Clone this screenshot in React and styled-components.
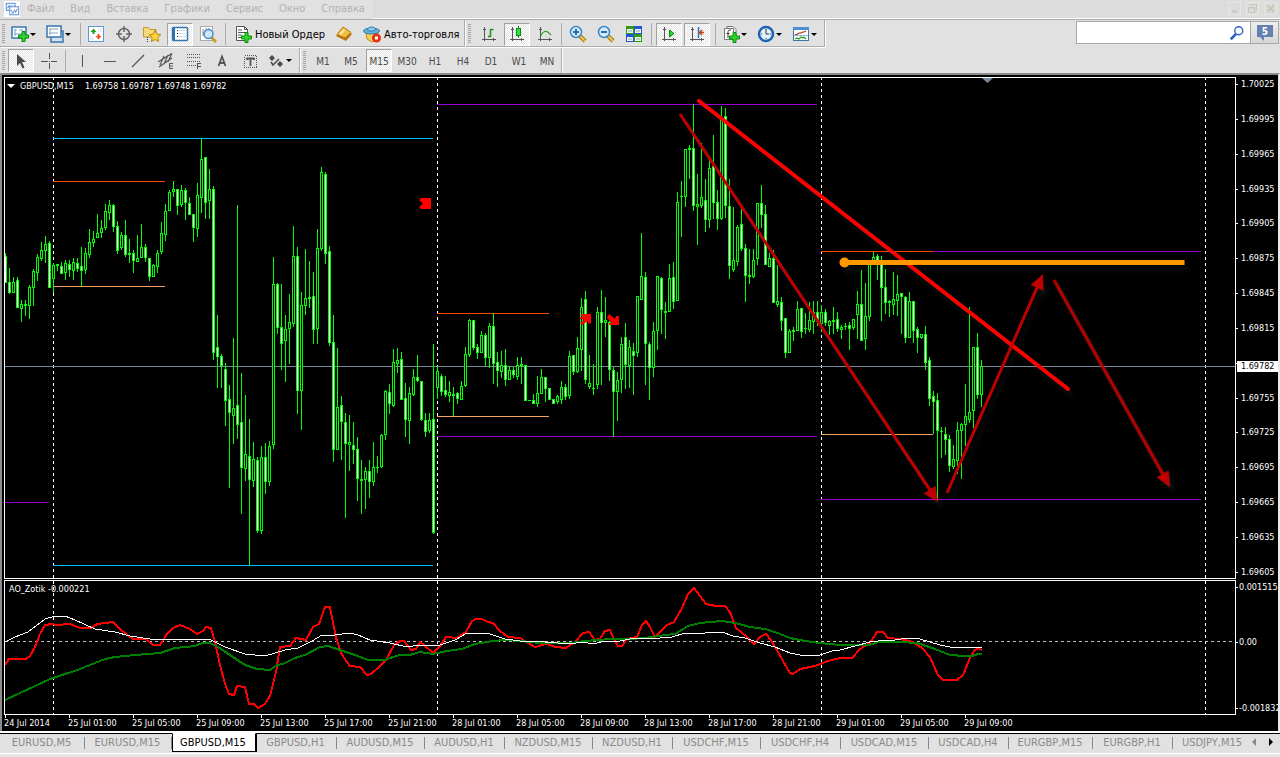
import React from "react";
import styled, { createGlobalStyle, css } from "styled-components";

const GlobalStyle = createGlobalStyle`
  * {
    box-sizing: border-box;
  }
  body {
    margin: 0;
    background: #e6e6e6;
    font-family: "DejaVu Sans Condensed", "DejaVu Sans", sans-serif;
    font-size: 11px;
    overflow-x: hidden;
  }
  button, input {
    font: inherit;
    margin: 0;
    padding: 0;
    border: 0;
    background: none;
  }
  svg {
    display: block;
  }
`;

const Terminal = styled.div`
  display: flex;
  flex-direction: column;
  min-height: 100vh;
`;

/* ---------- menu ---------- */

const MenuBar = styled.header`
  display: flex;
  align-items: stretch;
  justify-content: space-between;
  height: 20px;
  background: #dcdcdc;
  border-bottom: 1px solid #ababab;
  box-shadow: inset 0 -1px 0 #fff;
`;

const Menu = styled.nav`
  display: flex;
  align-items: center;
  gap: 16px;
  padding: 0 8px 1px 4px;
  background: #e1e1e1;
`;

const MenuItem = styled.button`
  color: #b2b2b2;
  line-height: 14px;
`;

const AppIcon = styled.div`
  background: #fff;
  margin-right: -9px;
`;

const WindowButtons = styled.div`
  display: flex;
  align-items: center;
  gap: 5px;
  padding-right: 3px;
  padding-bottom: 2px;
`;

const WindowButton = styled.button`
  width: 13px;
  height: 13px;
  border: 1px solid #e6e6e6;
`;

/* ---------- toolbars ---------- */

const ToolRow = styled.div`
  display: flex;
  justify-content: space-between;
  height: ${(p) => (p.$last ? "25px" : "28px")};
  background: #e1e1e1;
`;

const Group = styled.div`
  display: flex;
`;

const ToolBar = styled.div`
  display: flex;
  align-items: center;
  padding-top: ${(p) => (p.$flat ? "0" : "2px")};
  border-right: 1px solid #ababab;
  border-bottom: ${(p) => (p.$flat ? "0" : "1px solid #ababab")};
  box-shadow: 1px 1px 0 #fff;
  margin-right: 1px;
  margin-bottom: ${(p) => (p.$flat ? "0" : "1px")};
`;

const Grip = styled.span`
  width: ${(p) => p.$w || 8}px;
  height: 20px;
  background: repeating-linear-gradient(#a4a4a4 0 1px, #e1e1e1 1px 2px) 2px 0 / 3px 100% no-repeat;
`;

const Separator = styled.span`
  width: ${(p) => p.$w || 4}px;
  height: 22px;
  background: linear-gradient(#ababab, #ababab) center / 1px 100% no-repeat;
`;

const Tool = styled.button`
  display: flex;
  align-items: center;
  justify-content: ${(p) => (p.$menu || p.$text ? "flex-start" : "center")};
  gap: ${(p) => (p.$text ? "3px" : "1px")};
  width: ${(p) => (p.$menu ? "35px" : p.$text ? "auto" : "28px")};
  height: 23px;
  padding: ${(p) => (p.$menu ? "0 0 0 3px" : p.$text ? "0 5px" : "0")};
  color: #000;
  white-space: nowrap;
  ${(p) =>
    p.$time &&
    css`
      padding-top: 1px;
      font-size: 10px;
      color: #4a4a4a;
    `}
  ${(p) =>
    p.$on &&
    css`
      width: 26px;
      margin: 0 1px;
      border: 1px solid;
      border-color: #a0a0a0 #fff #fff #a0a0a0;
      background: repeating-conic-gradient(#fff 0 25%, #e4e4e4 0 50%) 0 0 / 2px 2px;
    `}
`;

const Caret = styled.span`
  border: 3px solid transparent;
  border-top-color: #000;
  border-bottom: 0;
`;

const SearchBox = styled.form`
  display: flex;
  align-items: stretch;
  height: 23px;
  margin: 1px 1px 0 0;
  border: 1px solid #a8a8a8;
  background: #fff;
`;

const SearchInput = styled.input`
  width: 152px;
  padding: 0 4px;
  outline: none;
`;

const SearchButton = styled.button`
  width: 21px;
`;

const ChatButton = styled.button`
  display: flex;
  align-items: center;
  justify-content: center;
  width: 28px;
  border-left: 1px solid #a8a8a8;
  background: linear-gradient(#eee, #d6d6d6);
`;

/* ---------- chart window ---------- */

const ChartWindow = styled.main`
  display: grid;
  grid-template-columns: minmax(0, 1fr) 42px;
  padding: 2px 0 0 2px;
  background: #000;
  color: #fff;
  font-size: 9px;
  line-height: 11px;
  border: solid #8c8c8c;
  border-width: 2px 2px 0 2px;
  border-right-color: #e8e8e8;
`;

const Pane = styled.section`
  position: relative;
  height: ${(p) => p.$h}px;
  margin-bottom: 1px;
  border: 1px solid #fff;
  overflow: hidden;
`;

const PaneTitle = styled.h2`
  position: absolute;
  top: 2px;
  left: 4px;
  display: flex;
  align-items: center;
  margin: 0;
  font-size: 9px;
  font-weight: 400;
  line-height: 12px;
`;

const Collapse = styled.span`
  border: 4px solid transparent;
  border-top-color: #fff;
  border-bottom: 0;
  margin: 0 5px 0 -2px;
`;

const Quote = styled.span`
  margin-left: 11px;
`;

const PriceScale = styled.ol`
  position: relative;
  display: flex;
  flex-direction: column;
  justify-content: space-between;
  height: 502px;
  margin: 0;
  padding: 2px 0 1px;
  list-style: none;
`;

const PriceMark = styled.li`
  display: flex;
  align-items: center;
  gap: 3px;
  height: 11px;
  white-space: nowrap;
  &::before {
    content: "";
    width: 2px;
    height: 1px;
    background: #fff;
  }
`;

/* rows follow the distance from zero to each end of the range */
const OscillatorScale = styled.ol`
  display: grid;
  grid-template-rows: 1515fr 1832fr 11px;
  height: 135px;
  margin: 0;
  padding: 2px 0 1px;
  list-style: none;
  overflow: hidden;
  ${PriceMark} {
    gap: 1px;
  }
`;

const LastPrice = styled.output`
  position: absolute;
  top: 284px;
  left: 1px;
  right: 0;
  padding-left: 4px;
  background: #fff;
  color: #000;
`;

const TimeScale = styled.ol`
  display: flex;
  height: 16px;
  margin: -1px 0 0;
  padding: 0;
  list-style: none;
`;

const TimeMark = styled.li`
  flex: 0 0 64px;
  white-space: nowrap;
  &::before {
    content: "";
    display: block;
    width: 1px;
    height: 3px;
    margin-left: 1px;
    background: #fff;
  }
`;

/* ---------- chart tabs ---------- */

const Tabs = styled.nav`
  display: flex;
  justify-content: space-between;
  height: 23px;
  background: linear-gradient(#fff 2px, #000 2px 3px, #e1e1e1 3px);
  border-bottom: 1px solid #fff;
`;

const TabList = styled.div`
  display: flex;
  min-width: 0;
  overflow: hidden;
`;

const Tab = styled.button`
  flex: 0 0 ${(p) => p.$w}px;
  height: 19px;
  margin-top: 2px;
  padding-right: 2px;
  color: ${(p) => (p.$active ? "#000" : "#8a8a8a")};
  font-size: 11px;
  line-height: 18px;
  background: ${(p) =>
    p.$active ? "#fff" : "linear-gradient(#8a8a8a, #8a8a8a) 100% 4px / 1px 12px no-repeat"};
  ${(p) =>
    p.$active &&
    css`
      border: 1px solid #000;
      border-top-color: #fff;
      box-shadow: 1px 0 0 #000;
    `}
`;

const TabArrows = styled.div`
  display: flex;
  align-items: center;
  gap: 13px;
  padding: 0 7px;
`;

const TabArrow = styled.button`
  border: 4px solid transparent;
  border-left: ${(p) => (p.$next ? "4px solid #000" : "0")};
  border-right: ${(p) => (p.$next ? "0" : "4px solid #8a8a8a")};
`;

/* ---------- icons ---------- */

function Icon({ children, size = 18 }) {
  return (
    <svg width={size} height={size} viewBox="0 0 18 18" fill="none" aria-hidden="true">
      {children}
    </svg>
  );
}

const Plus = ({ x = 7, y = 7 }) => (
  <path
    transform={`translate(${x} ${y})`}
    d="M4 .5h3V4h3.5v3H7v3.5H4V7H.5V4H4z"
    fill="#2fd52f"
    stroke="#0a8a0a"
  />
);

const Axes = () => (
  <g stroke="#555" shapeRendering="crispEdges">
    <path d="M4.500 2v14M2 14.500h14" />
    <path d="M3 4.500h3M13.500 13v3" />
  </g>
);

const Lens = ({ sign }) => (
  <>
    <path d="M11 11l5 5" stroke="#9a7413" strokeWidth="4" />
    <path d="M11 11l5 5" stroke="#f2c94a" strokeWidth="2" />
    <circle cx="7" cy="7" r="5.500" fill="#d3ecfb" stroke="#3f86c4" strokeWidth="1.500" />
    {sign && <path d={sign === "+" ? "M4 7h6M7 4v6" : "M4 7h6"} stroke="#2b6ea8" strokeWidth="2" />}
  </>
);

const icons = {
  app: (
    <>
      <rect x="2.500" y="2.500" width="10" height="8" fill="#e8f1ff" stroke="#4a82cf" />
      <path d="M4 8l2-3 1 3 2-3" stroke="#4a82cf" />
      <rect x="6.500" y="6.500" width="10" height="9" fill="#fff" stroke="#4a82cf" />
      <path d="M8 10l2 4 2-4 1 3 2-4" stroke="#4a82cf" />
    </>
  ),
  newChart: (
    <>
      <rect x="1" y="2" width="14" height="11" fill="#fff" stroke="#3a76ae" strokeWidth="1.500" />
      <path d="M4 4v7M3 9h9M3 5h3M8 5h4" stroke="#7ba4c8" />
      <Plus x={7} y={6} />
    </>
  ),
  profiles: (
    <>
      <rect x="5" y="6" width="12" height="11" fill="#cfe2f3" stroke="#3a76ae" strokeWidth="1.500" />
      <rect x="1" y="1" width="14" height="11" fill="#fff" stroke="#3a76ae" strokeWidth="1.500" />
      <path d="M4 4v6M3 8h9M3 4h9" stroke="#7ba4c8" />
    </>
  ),
  market: (
    <>
      <rect x="1.500" y="1.500" width="15" height="15" fill="#fff" stroke="#5b9bd5" />
      <path d="M11 4h4M11 6h4M3 12h3M3 14h4" stroke="#d5dde5" />
      <path d="M6.500 3.500l3 3.500h-2v2h-2V7h-2z" fill="#1ea51e" />
      <path d="M11.500 14.500l-3-3.500h2V9h2v2h2z" fill="#e8501c" />
    </>
  ),
  crosshair: (
    <>
      <circle cx="9" cy="9" r="5.500" stroke="#666" strokeWidth="1.500" />
      <path d="M9 1v6M9 11v6M1 9h6M11 9h6" stroke="#666" strokeWidth="1.500" />
    </>
  ),
  navigator: (
    <>
      <path d="M.5 12V2.500h5l1.500 2h6V12z" fill="#f8d878" stroke="#c59a2c" />
      <path d="M4.500 12v5" stroke="#333" strokeDasharray="1 1" />
      <path
        d="M12 5.500l1.800 3.700 4 .5-3 2.700.8 4.100-3.600-2-3.600 2 .8-4.100-3-2.700 4-.5z"
        fill="#ffd83a"
        stroke="#b9860f"
      />
    </>
  ),
  dataWindow: (
    <>
      <rect x="1.500" y="2.500" width="15" height="13" rx="1" fill="#fff" stroke="#3a76ae" strokeWidth="1.500" />
      <path d="M2 3h2v12H2z" fill="#2c6cb0" />
      <path d="M6 5.500h10M6 8.500h10M6 11.500h10" stroke="#d4e0ec" />
      <path d="M6.500 5v8" stroke="#333" strokeDasharray="1 2" />
    </>
  ),
  tester: (
    <>
      <path d="M1.500 1.500h12v14h-12z" fill="#fff" stroke="#aaa" />
      <path d="M4 4v7M7 3v4M10 3v4M4 8h3" stroke="#888" />
      <path d="M12 12l5 5" stroke="#c89b2b" strokeWidth="3" />
      <circle cx="9.500" cy="9" r="4.500" fill="#c5e2f8" fillOpacity=".85" stroke="#4a8cc8" strokeWidth="1.500" />
    </>
  ),
  order: (
    <>
      <path d="M2.500 1.500h8l3 3v11h-11z" fill="#fff" stroke="#555" />
      <path d="M10.500 1.500v3h3" stroke="#555" />
      <path d="M4 5h4M4 7.500h7M4 10h4M4 12.500h3" stroke="#555" />
      <Plus x={7} y={7} />
    </>
  ),
  gold: (
    <>
      <path d="M1 11L8 3l9 6-6 7z" fill="#b9770c" />
      <path d="M2 9.500L8 2l8 5.500-6 5.500z" fill="#f0be45" stroke="#b9770c" />
      <path d="M4 9l4.500-5 2 1.200L6 10z" fill="#ffe89a" />
    </>
  ),
  auto: (
    <>
      <path d="M3 8h12l-1 6-5 3-5-3z" fill="#f6cf54" stroke="#c08d1c" />
      <ellipse cx="8.500" cy="6" rx="8" ry="3" fill="#63b0dc" stroke="#2f7cab" />
      <path d="M4.500 5c0-4 8-4 8 0-2 1.500-6 1.500-8 0z" fill="#8ecbec" stroke="#2f7cab" />
      <circle cx="13.500" cy="13" r="4.500" fill="#e03214" />
      <path d="M12 11.500h3v3h-3z" fill="#fff" />
    </>
  ),
  bars: (
    <>
      <Axes />
      <path d="M8 11.500h2.500M10.500 4v8M10.500 4.500h3" stroke="#169516" strokeWidth="1.500" />
    </>
  ),
  candles: (
    <>
      <Axes />
      <path d="M10.500 1v12" stroke="#0a8a0a" />
      <rect x="8.500" y="3.500" width="4" height="7" fill="#2fe05a" stroke="#0a8a0a" />
    </>
  ),
  line: (
    <>
      <Axes />
      <path d="M4 12c3-6 6-8 11-2" stroke="#2a9a2a" strokeWidth="1.200" />
    </>
  ),
  zoomIn: <Lens sign="+" />,
  zoomOut: <Lens sign="-" />,
  tile: (
    <>
      <path d="M1 1h8v8H1zM9 9h8v8H9z" fill="#2f9a1a" />
      <path d="M9 1h8v8H9zM1 9h8v8H1z" fill="#1f56d0" />
      <path d="M2 4h6v4H2zM10 4h6v4h-6zM2 12h6v4H2zM10 12h6v4h-6z" fill="#eef5ee" />
      <path d="M3 6h4M11 6h4M3 14h4M11 14h4" stroke="#8aa" />
    </>
  ),
  autoScroll: (
    <>
      <Axes />
      <path d="M9.500 5v7l4.500-3.500z" fill="#2fd52f" stroke="#0a8a0a" />
    </>
  ),
  shift: (
    <>
      <Axes />
      <path d="M10.500 2v11" stroke="#2477b8" strokeWidth="1.500" />
      <path d="M16 7.500h-4M14 5l-2.500 2.500L14 10" stroke="#c23c10" strokeWidth="1.500" />
    </>
  ),
  indicators: (
    <>
      <path d="M5 1.500h6l3 3v8H5z" fill="#fff" stroke="#777" />
      <path d="M2.500 3.500h9v11h-9z" fill="#fff" stroke="#777" />
      <path d="M9 5c-3 0-3 1-3 3v5M4.500 8.500h3" stroke="#333" />
      <Plus x={7} y={7} />
    </>
  ),
  periods: (
    <>
      <circle cx="9" cy="9" r="7" fill="#e6f2fb" stroke="#1c62b4" strokeWidth="2.500" />
      <path d="M9 4.500V9h3M9 4v1M9 13v1M4 9h1M13 9h1" stroke="#333" />
    </>
  ),
  templates: (
    <>
      <rect x="1.500" y="2.500" width="15" height="13" fill="#fff" stroke="#3a76ae" />
      <path d="M1 2h16v3H1z" fill="#4f8fd0" />
      <path d="M3 9.500h2l2-1.500h2l2-1h1l2-1" stroke="#a83018" strokeWidth="1.200" />
      <path d="M2 10.500h14" stroke="#9ab8d4" />
      <path d="M3 14l2-1 2 1 2-2 2 1 1-1 2 2" stroke="#2a9a2a" strokeWidth="1.200" />
    </>
  ),
  cursor: <path d="M5 2v12l3-3 2.500 5.500 2-1L10 10h4z" fill="#4a4a4a" />,
  cross: <path d="M9.500 1v6M9.500 11v6M1 9.500h7M11 9.500h6M9 9.500h1" stroke="#555" shapeRendering="crispEdges" />,
  vline: <path d="M9.500 3v12" stroke="#555" shapeRendering="crispEdges" />,
  hline: <path d="M3 9.500h12" stroke="#555" shapeRendering="crispEdges" />,
  trend: <path d="M3 15L15 3" stroke="#555" strokeWidth="1.300" />,
  channel: (
    <>
      <path d="M1 10L14 2M2 15L15 6M3 13l4-9M7 12l4-9M11 10l4-9" stroke="#555" strokeWidth="1.200" />
      <path d="M16 11.500h-3.500v5H16M13 14h3" stroke="#555" />
    </>
  ),
  fibo: (
    <g shapeRendering="crispEdges" stroke="#555">
      <path d="M2 2.500h14M2 5.500h14M2 9.500h14M2 13.500h9" strokeDasharray="1 1" />
      <path d="M12.500 17v-5.500H16M13 14.500h3" />
    </g>
  ),
  textA: <path d="M5.500 14L9 4.500l3.500 9.500M6.500 11h5" stroke="#555" strokeWidth="1.800" />,
  label: (
    <>
      <rect x="3.500" y="3.500" width="12" height="12" stroke="#555" strokeDasharray="1 1" shapeRendering="crispEdges" />
      <path d="M5.500 6.500h8M9.500 6v8M6 6v2M13 6v2" stroke="#555" strokeWidth="1.800" />
    </>
  ),
  arrows: (
    <>
      <path d="M2 6l3-3 3 3-3 3zM10 12l3-3 3 3-3 3z" fill="#4a4a4a" />
      <path d="M4 10l2 3 6-6" stroke="#4a4a4a" strokeWidth="1.500" />
    </>
  ),
};

/* ---------- chart data ---------- */

// high, body top, body bottom, low; trailing 1 = falling candle
const CANDLES = `
253 256 283 283 1,268 282 293 294 1,277 282 293 293 0,277 280 308 308 1,300 304 309 322 0,300 304 306 316 0,
285 287 306 319 0,269 271 288 306 0,254 257 273 281 0,242 250 259 261 0,236 244 251 263 0,241 243 288 288 1,
263 265 279 293 0,264 264 266 271 0,262 266 274 274 1,260 263 273 280 0,260 264 270 277 1,258 262 271 280 0,
258 263 269 272 1,247 266 271 286 1,248 253 270 274 0,229 242 255 258 0,231 239 243 247 0,214 233 238 238 0,
220 228 233 238 0,204 211 228 230 0,200 205 213 220 0,204 205 227 232 1,221 226 251 254 1,232 235 248 250 0,
220 235 255 257 1,239 253 255 263 0,250 253 261 273 1,235 258 262 262 0,224 247 258 258 0,244 247 258 262 1,
258 258 277 281 1,264 265 277 277 0,250 253 267 273 0,222 233 252 254 0,204 211 235 241 0,190 192 211 211 0,
181 189 192 197 0,189 189 206 215 1,185 190 205 207 0,188 190 203 220 1,197 203 215 215 1,214 214 228 242 1,
183 195 229 237 0,138 159 198 213 0,157 157 203 219 1,169 189 201 219 0,186 189 353 360 1,315 347 357 388 1,
354 356 366 388 1,363 369 401 426 1,385 399 413 488 1,338 408 416 444 0,205 405 425 439 1,373 422 468 514 1,
395 454 469 481 0,419 456 480 565 1,442 459 481 487 0,457 460 531 533 1,446 457 531 534 0,443 457 482 494 1,
441 446 482 486 0,257 284 445 449 0,283 284 328 334 1,284 327 344 370 1,315 329 341 382 0,294 322 329 364 0,
226 256 324 327 0,247 256 391 414 1,292 305 391 430 0,249 298 306 315 0,261 297 299 308 0,272 296 330 344 1,
229 248 329 344 0,167 172 249 251 0,172 174 254 264 1,246 251 343 346 1,315 342 450 462 1,348 407 450 450 0,
396 405 422 460 1,413 422 444 518 1,415 442 445 471 0,422 445 450 464 1,437 449 479 501 1,460 479 481 514 0,
467 471 480 509 0,460 471 482 498 1,442 467 482 486 0,456 467 468 473 0,434 435 467 468 0,390 391 435 440 0,
384 392 404 414 1,349 362 406 407 0,348 360 364 373 0,352 359 400 400 1,383 398 420 437 1,387 393 421 444 0,
369 377 395 396 0,355 377 381 382 1,381 381 420 421 1,413 420 432 437 1,413 420 431 433 0,344 419 533 534 1,
366 371 388 399 0,374 376 392 396 1,376 390 395 397 1,381 392 396 402 0,387 394 396 416 0,392 393 399 404 1,
381 386 400 400 0,347 354 386 387 0,319 320 355 357 0,320 320 348 350 1,344 347 353 359 1,331 335 353 353 0,
333 335 358 366 1,323 326 358 368 0,313 326 364 384 1,352 362 371 387 1,351 365 372 378 0,349 365 380 386 1,
366 370 380 380 0,367 370 375 378 1,357 365 377 380 0,357 364 366 384 0,365 365 401 401 1,400 400 401 401 0,
394 400 404 404 1,376 393 404 407 0,369 377 394 394 0,377 377 389 402 1,388 388 400 400 1,399 399 404 404 1,
395 396 402 404 0,381 387 400 404 0,384 387 397 400 1,351 356 396 399 0,355 355 372 375 1,337 348 372 373 0,
298 307 350 371 0,291 299 380 384 1,355 383 387 389 0,364 388 389 395 0,307 312 385 389 0,290 312 323 385 1,
297 320 323 337 0,321 322 370 381 1,367 370 392 437 1,372 380 392 421 0,337 344 380 393 0,323 337 365 389 1,
340 347 366 388 0,343 351 356 395 1,296 296 353 357 0,233 276 300 300 0,272 277 344 385 1,342 344 368 400 1,
322 331 368 377 0,276 276 331 350 0,277 278 310 334 1,302 311 313 339 0,264 278 312 312 0,262 277 302 309 1,
192 202 301 301 0,181 196 197 237 0,149 149 197 207 0,145 148 150 179 0,104 148 206 211 1,174 204 207 245 0,
143 197 206 208 0,179 200 220 232 1,160 168 220 228 0,135 166 203 219 1,190 202 219 230 1,106 120 219 220 0,
108 116 206 218 1,179 206 266 279 1,207 260 270 272 0,225 227 262 266 0,209 224 249 251 1,244 248 276 302 1,
249 275 277 284 0,249 260 277 278 0,203 203 259 265 0,185 203 215 228 1,205 214 265 265 1,253 258 267 267 0,
250 258 303 303 1,265 301 305 307 0,297 302 321 331 1,318 318 353 358 1,329 331 353 353 0,327 330 332 341 0,
301 309 331 331 0,308 308 332 338 1,313 328 329 334 0,302 320 330 332 0,301 312 322 334 0,301 312 322 326 1,
305 312 324 332 0,309 312 323 326 1,320 321 326 335 0,307 320 322 334 0,312 319 329 332 1,325 327 330 339 0,
323 326 327 330 0,322 325 329 350 1,319 319 328 330 0,291 304 315 339 0,270 304 341 341 1,283 316 339 350 0,
263 263 317 321 0,252 257 262 262 0,254 256 264 280 1,256 261 288 321 1,269 287 303 314 1,300 301 303 317 0,
272 299 305 315 0,275 294 301 316 0,293 293 297 334 1,296 297 338 343 1,292 301 338 338 0,301 301 331 343 1,
327 329 338 353 1,334 334 338 339 0,326 334 363 370 1,357 360 399 406 1,391 396 402 434 1,393 400 431 499 1,
427 431 432 458 0,427 434 440 455 1,435 439 466 472 1,445 459 467 469 0,422 430 461 474 0,423 424 431 479 0,
384 416 425 446 0,307 412 420 423 0,347 347 411 428 0,333 347 395 399 1,360 366 395 407 0`
  .trim()
  .split(/,\s*/)
  .map((row, i) => {
    const [high, top, bottom, low, down] = row.split(" ").map(Number);
    return { x: 5 + i * 4, high, top, bottom, low, down };
  });

// x1, x2, y, colour
const LEVELS = [
  [53, 433, 138, "#00bfff"],
  [53, 433, 565, "#00bfff"],
  [53, 165, 181, "#ff4500"],
  [53, 165, 286, "#f4a460"],
  [5, 49, 502, "#9400d3"],
  [437, 817, 104, "#9400d3"],
  [437, 817, 436, "#9400d3"],
  [437, 549, 313, "#ff4500"],
  [437, 549, 416, "#f4a460"],
  [933, 1201, 251, "#9400d3"],
  [821, 933, 251, "#ff4500"],
  [821, 933, 434, "#f4a460"],
  [821, 1201, 499, "#9400d3"],
];

const DAYS = [53, 437, 821, 1205];

const AO_FAST =
  "5,665 9,659 26,659 30,656 35,647 40,634 45,625 52,624 56,625 70,624 80,628 91,628 97,624 105,623 113,622 120,629 126,634 133,639 146,639 153,645 160,645 167,634 173,628 180,625 190,629 197,634 203,631 206,627 211,628 215,642 220,665 225,684 229,694 234,695 237,686 245,687 249,704 254,704 258,708 265,704 270,696 276,672 280,647 290,646 296,638 306,640 313,627 319,624 325,607 330,607 336,638 342,655 350,666 360,667 367,675 371,674 380,666 386,660 394,645 400,641 404,641 411,650 416,649 420,642 424,645 433,653 440,646 446,637 457,638 466,632 472,621 476,619 482,619 488,622 493,623 500,631 508,637 520,638 528,643 535,647 546,644 556,647 566,648 576,641 583,633 589,632 595,640 600,639 605,631 610,630 613,637 618,646 622,646 627,639 637,637 642,625 646,621 650,627 655,637 660,632 667,625 674,622 682,608 688,594 694,588 700,596 706,604 716,606 725,606 730,612 736,628 741,632 747,637 754,644 760,637 766,634 771,640 778,652 787,668 790,673 793,674 800,669 815,666 828,661 840,658 852,658 860,649 870,643 877,632 883,632 888,638 900,639 913,642 922,648 930,657 938,675 943,680 957,680 963,675 970,658 974,651 978,648 982,650";

const AO_SLOW =
  "5,700 20,693 35,686 50,679 65,674 75,671 90,665 105,659 115,657 135,655 160,653 175,648 195,646 202,643 210,643 218,647 230,655 245,665 257,669 270,670 277,665 283,664 295,658 305,655 320,647 328,646 340,650 355,655 368,660 385,660 393,657 400,655 410,655 420,652 433,654 447,651 462,649 475,644 493,641 505,640 520,641 540,643 570,643 585,641 610,639 630,639 645,638 665,635 675,634 688,626 700,623 722,621 735,623 750,627 765,629 775,632 790,638 805,641 820,643 840,645 870,645 878,642 900,642 917,643 935,649 950,655 965,656 972,656 978,654 982,654";

const AO_SIGNAL =
  "5,642 15,637 28,632 45,619 55,616 65,616 75,620 95,629 115,632 130,636 150,639 165,640 180,639 211,640 225,647 245,654 265,656 285,650 298,648 312,641 322,635 335,635 350,633 358,635 370,640 390,643 407,647 420,645 440,645 455,640 467,633 490,634 505,639 520,641 545,642 570,644 583,642 593,644 605,641 615,642 630,639 660,638 672,637 685,633 705,633 722,632 733,636 745,638 760,643 775,647 790,653 805,656 820,655 832,651 840,650 855,646 870,642 878,641 895,640 908,638 920,639 930,642 940,645 950,647 982,647";

// the empty mark keeps its tick, the last price tag stands over it
const PRICES = [
  "1.70025", "1.69995", "1.69965", "1.69935", "1.69905", "1.69875", "1.69845", "1.69815",
  "", "1.69755", "1.69725", "1.69695", "1.69665", "1.69635", "1.69605",
];

const TIMES = [
  "24 Jul 2014", "25 Jul 01:00", "25 Jul 05:00", "25 Jul 09:00", "25 Jul 13:00", "25 Jul 17:00",
  "25 Jul 21:00", "28 Jul 01:00", "28 Jul 05:00", "28 Jul 09:00", "28 Jul 13:00", "28 Jul 17:00",
  "28 Jul 21:00", "29 Jul 01:00", "29 Jul 05:00", "29 Jul 09:00",
];

const TABS = [
  ["EURUSD,M5", 85], ["EURUSD,M15", 87], ["GBPUSD,M15", 84], ["GBPUSD,H1", 81], ["AUDUSD,M15", 88],
  ["AUDUSD,H1", 80], ["NZDUSD,M15", 88], ["NZDUSD,H1", 80], ["USDCHF,M15", 88], ["USDCHF,H4", 80],
  ["USDCAD,M15", 88], ["USDCAD,H4", 80], ["EURGBP,M15", 84], ["EURGBP,H1", 80], ["USDJPY,M15", 80],
];

const MENU = ["Файл", "Вид", "Вставка", "Графики", "Сервис", "Окно", "Справка"];
const PERIODS = ["M1", "M5", "M15", "M30", "H1", "H4", "D1", "W1", "MN"];

function Candle({ x, high, top, bottom, low, down }) {
  const height = bottom - top;
  return (
    <g fill="#0f0">
      <rect x={x} y={high} width="1" height={Math.max(low - high, 1)} />
      <rect x={x - 1} y={top} width="3" height={Math.max(height, 1)} />
      {height > 2 && (
        <rect x={x} y={top + 1} width="1" height={height - 2} fill={down ? "#fff" : "#000"} />
      )}
    </g>
  );
}

function DayLines() {
  return DAYS.map((x) => (
    <path key={x} d={`M${x + 0.5} 77V720`} stroke="#fff" strokeDasharray="3 3" />
  ));
}

function Arrow({ x1, y1, x2, y2 }) {
  const angle = (Math.atan2(y2 - y1, x2 - x1) * 180) / Math.PI;
  const length = Math.hypot(x2 - x1, y2 - y1);
  return (
    <g transform={`translate(${x1} ${y1}) rotate(${angle})`}>
      <path d={`M0 0H${length - 10}`} stroke="#c00000" strokeWidth="3" />
      <path d={`M${length} 0l-15-7v14z`} fill="#c00000" />
    </g>
  );
}

function PriceChart() {
  return (
    <svg width="100%" height="100%" role="img" aria-label="GBPUSD M15">
      <defs>
        <filter id="glow" filterUnits="userSpaceOnUse" x="0" y="0" width="1280" height="600">
          <feDropShadow dx="4" dy="6" stdDeviation="2" floodColor="#777" floodOpacity="0.1" />
        </filter>
      </defs>
      <g transform="translate(-5 -78)">
        <g shapeRendering="crispEdges">
          <DayLines />
          <path d="M5 366.500H1280" stroke="#778899" />
          {LEVELS.map(([x1, x2, y, color]) => (
            <rect key={`${x1}-${y}`} x={x1} y={y} width={x2 - x1} height="1" fill={color} />
          ))}
          {CANDLES.map((c) => (
            <Candle key={c.x} {...c} />
          ))}
        </g>
        <path d="M982 78h11l-5.500 5z" fill="#778899" />
        <path d="M421 198h10v11h-10l-2-2 4-3.500-4-3.500z" fill="#f00" />
        <path d="M581 314h10v9l-3 1v-3l-6 4-2-2 4-3-4-1v-2h4l-3-1z" fill="#f00" />
        <path d="M609 314l6 5 1-3h3v9h-10v-2h3l-5-5z" fill="#f00" />
        <g filter="url(#glow)">
          <path d="M699 101L1068 389" stroke="#f00" strokeWidth="4" strokeLinecap="round" />
          <Arrow x1={680} y1={114} x2={938} y2={502} />
          <Arrow x1={947} y1={493} x2={1043} y2={274} />
          <Arrow x1={1054} y1={280} x2={1170} y2={487} />
          <path d="M845 262.500H1184.500" stroke="#ff9900" strokeWidth="5" />
          <circle cx="844.500" cy="262.500" r="5" fill="#ff9900" />
        </g>
      </g>
    </svg>
  );
}

function OscillatorChart() {
  return (
    <svg width="100%" height="100%" role="img" aria-label="AO_Zotik">
      <g transform="translate(-5 -581)" fill="none" shapeRendering="crispEdges">
        <DayLines />
        <path d="M5 641.500H1280" stroke="#c0c0c0" strokeDasharray="3 3" />
        <polyline points={AO_FAST} stroke="#f00" strokeWidth="2" />
        <polyline points={AO_SLOW} stroke="#008000" strokeWidth="2" />
        <polyline points={AO_SIGNAL} stroke="#fff" />
      </g>
    </svg>
  );
}

function ToolButton({ name, label, text, menu, on }) {
  return (
    <Tool type="button" aria-label={text ? undefined : label} $menu={menu} $on={on} $text={text}>
      <Icon>{icons[name]}</Icon>
      {text}
      {menu && <Caret />}
    </Tool>
  );
}

function App() {
  return (
    <Terminal>
      <GlobalStyle />
      <MenuBar>
        <Menu>
          <AppIcon>
            <Icon size={16}>{icons.app}</Icon>
          </AppIcon>
          {MENU.map((item) => (
            <MenuItem key={item} type="button">
              {item}
            </MenuItem>
          ))}
        </Menu>
        <WindowButtons>
          <WindowButton type="button" aria-label="Minimize">
            <svg width="11" height="11"><path d="M3 8.500h5" stroke="#c8c8b8" strokeWidth="2" /></svg>
          </WindowButton>
          <WindowButton type="button" aria-label="Restore">
            <svg width="11" height="11" fill="none" stroke="#c8c8b8">
              <path d="M3.500 3V1.500h6v5H8M1.500 4.500h6v5h-6zM1 5h7" />
            </svg>
          </WindowButton>
          <WindowButton type="button" aria-label="Close">
            <svg width="11" height="11"><path d="M2 2l7 7M9 2L2 9" stroke="#c8c8b8" strokeWidth="2" /></svg>
          </WindowButton>
        </WindowButtons>
      </MenuBar>

      <ToolRow>
        <Group>
          <ToolBar>
            <Grip />
            <ToolButton name="newChart" label="New chart" menu />
            <ToolButton name="profiles" label="Profiles" menu />
            <Separator />
            <ToolButton name="market" label="Market watch" />
            <ToolButton name="crosshair" label="Data window" />
            <ToolButton name="navigator" label="Navigator" />
            <ToolButton name="dataWindow" label="Terminal" on />
            <ToolButton name="tester" label="Strategy tester" />
            <Separator $w={7} />
            <ToolButton name="order" text="Новый Ордер" />
            <ToolButton name="gold" label="MetaEditor" />
            <ToolButton name="auto" text="Авто-торговля" />
          </ToolBar>
          <ToolBar>
            <Grip $w={9} />
            <ToolButton name="bars" label="Bar chart" />
            <ToolButton name="candles" label="Candlesticks" on />
            <ToolButton name="line" label="Line chart" />
            <Separator $w={5} />
            <ToolButton name="zoomIn" label="Zoom in" />
            <ToolButton name="zoomOut" label="Zoom out" />
            <ToolButton name="tile" label="Tile windows" />
            <Separator $w={7} />
            <ToolButton name="autoScroll" label="Auto scroll" on />
            <ToolButton name="shift" label="Chart shift" on />
            <Separator $w={8} />
            <ToolButton name="indicators" label="Indicators" menu />
            <ToolButton name="periods" label="Periods" menu />
            <ToolButton name="templates" label="Templates" menu />
          </ToolBar>
        </Group>
        <SearchBox onSubmit={(e) => e.preventDefault()}>
          <SearchInput type="text" aria-label="Search" />
          <SearchButton type="submit" aria-label="Find">
            <Icon size={16}>
              <path d="M8 10l-6 6" stroke="#2a5cc4" strokeWidth="3" />
              <circle cx="11" cy="6.500" r="4.500" fill="#fff" stroke="#2a5cc4" strokeWidth="1.500" />
            </Icon>
          </SearchButton>
          <ChatButton type="button" aria-label="Messages: 5">
            <svg width="16" height="17" aria-hidden="true">
              <path d="M0 1h16v12H7v4l-4-4H0z" fill="#6480b0" />
              <text x="8" y="11" fontSize="10" fontWeight="700" fill="#fff" textAnchor="middle">5</text>
            </svg>
          </ChatButton>
        </SearchBox>
      </ToolRow>

      <ToolRow $last>
        <Group>
          <ToolBar $flat>
            <Grip $w={7} />
            <ToolButton name="cursor" label="Cursor" on />
            <ToolButton name="cross" label="Crosshair" />
            <Separator $w={5} />
            <ToolButton name="vline" label="Vertical line" />
            <ToolButton name="hline" label="Horizontal line" />
            <ToolButton name="trend" label="Trendline" />
            <ToolButton name="channel" label="Equidistant channel" />
            <ToolButton name="fibo" label="Fibonacci retracement" />
            <ToolButton name="textA" label="Text" />
            <ToolButton name="label" label="Text label" />
            <ToolButton name="arrows" label="Arrows" menu />
          </ToolBar>
          <ToolBar $flat>
            <Grip $w={8} />
            {PERIODS.map((period) => (
              <Tool key={period} type="button" $time $on={period === "M15"}>
                {period}
              </Tool>
            ))}
          </ToolBar>
        </Group>
      </ToolRow>

      <ChartWindow>
        <Pane $h={502}>
          <PriceChart />
          <PaneTitle>
            <Collapse />
            GBPUSD,M15
            <Quote>1.69758 1.69787 1.69748 1.69782</Quote>
          </PaneTitle>
        </Pane>
        <PriceScale>
          {PRICES.map((price, i) => (
            <PriceMark key={i}>{price}</PriceMark>
          ))}
          <LastPrice>1.69782</LastPrice>
        </PriceScale>
        <Pane $h={135}>
          <OscillatorChart />
          <PaneTitle>AO_Zotik -0.000221</PaneTitle>
        </Pane>
        <OscillatorScale>
          <PriceMark>0.001515</PriceMark>
          <PriceMark>0.00</PriceMark>
          <PriceMark>-0.001832</PriceMark>
        </OscillatorScale>
        <TimeScale>
          {TIMES.map((time) => (
            <TimeMark key={time}>{time}</TimeMark>
          ))}
        </TimeScale>
      </ChartWindow>

      <Tabs>
        <TabList>
          {TABS.map(([name, width]) => (
            <Tab key={name} type="button" $w={width} $active={name === "GBPUSD,M15"}>
              {name}
            </Tab>
          ))}
        </TabList>
        <TabArrows>
          <TabArrow type="button" aria-label="Previous charts" />
          <TabArrow type="button" aria-label="Next charts" $next />
        </TabArrows>
      </Tabs>
    </Terminal>
  );
}

export default App;
